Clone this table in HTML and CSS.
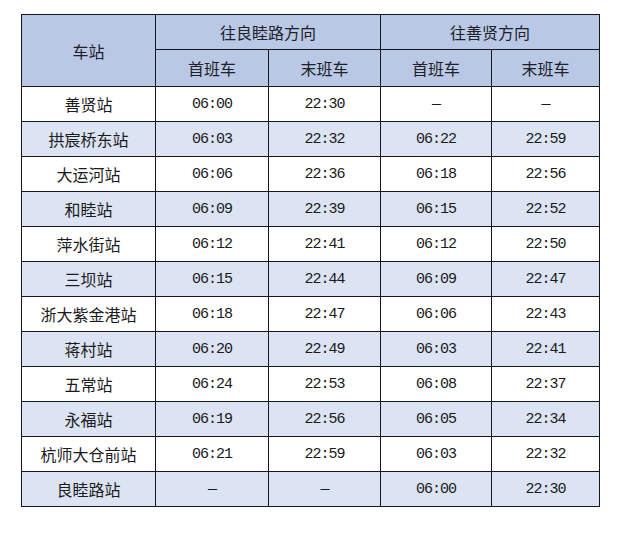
FILE: index.html
```html
<!DOCTYPE html>
<html lang="zh-CN">
<head>
<meta charset="utf-8">
<link rel="stylesheet" href="styles.css">
</head>
<body>
<table class="timetable">
  <colgroup>
    <col class="c-station">
    <col class="c1">
    <col class="c2">
    <col class="c3">
    <col class="c4">
  </colgroup>
  <thead>
    <tr class="h1">
      <th rowspan="2" class="station-h">车站</th>
      <th colspan="2">往良睦路方向</th>
      <th colspan="2">往善贤方向</th>
    </tr>
    <tr class="h2">
      <th>首班车</th><th>末班车</th><th>首班车</th><th>末班车</th>
    </tr>
  </thead>
  <tbody>
    <tr><td class="st">善贤站</td><td class="t">06:00</td><td class="t">22:30</td><td class="t">—</td><td class="t">—</td></tr>
    <tr><td class="st">拱宸桥东站</td><td class="t">06:03</td><td class="t">22:32</td><td class="t">06:22</td><td class="t">22:59</td></tr>
    <tr><td class="st">大运河站</td><td class="t">06:06</td><td class="t">22:36</td><td class="t">06:18</td><td class="t">22:56</td></tr>
    <tr><td class="st">和睦站</td><td class="t">06:09</td><td class="t">22:39</td><td class="t">06:15</td><td class="t">22:52</td></tr>
    <tr><td class="st">萍水街站</td><td class="t">06:12</td><td class="t">22:41</td><td class="t">06:12</td><td class="t">22:50</td></tr>
    <tr><td class="st">三坝站</td><td class="t">06:15</td><td class="t">22:44</td><td class="t">06:09</td><td class="t">22:47</td></tr>
    <tr><td class="st">浙大紫金港站</td><td class="t">06:18</td><td class="t">22:47</td><td class="t">06:06</td><td class="t">22:43</td></tr>
    <tr><td class="st">蒋村站</td><td class="t">06:20</td><td class="t">22:49</td><td class="t">06:03</td><td class="t">22:41</td></tr>
    <tr><td class="st">五常站</td><td class="t">06:24</td><td class="t">22:53</td><td class="t">06:08</td><td class="t">22:37</td></tr>
    <tr><td class="st">永福站</td><td class="t">06:19</td><td class="t">22:56</td><td class="t">06:05</td><td class="t">22:34</td></tr>
    <tr><td class="st">杭师大仓前站</td><td class="t">06:21</td><td class="t">22:59</td><td class="t">06:03</td><td class="t">22:32</td></tr>
    <tr><td class="st">良睦路站</td><td class="t">—</td><td class="t">—</td><td class="t">06:00</td><td class="t">22:30</td></tr>
  </tbody>
</table>
</body>
</html>
```

FILE: styles.css
```css
html, body {
  margin: 0;
  padding: 0;
  background: #ffffff;
}

body {
  padding: 14px 0 0 21px;
  font-family: "Noto Sans CJK SC", "Noto Sans", sans-serif;
  color: #1c1c1c;
}

.timetable {
  border-collapse: collapse;
  table-layout: fixed;
  width: 579px;
  border: 1px solid #1a1a24;
  border-top-color: #6d7a96;
}

.c-station { width: 134px; }
.c1 { width: 113px; }
.c2 { width: 112px; }
.c3 { width: 111px; }
.c4 { width: 108px; }

.timetable th,
.timetable td {
  border: 1px solid #16161e;
  padding: 0;
  text-align: center;
  vertical-align: middle;
  font-weight: normal;
}

.timetable th {
  background: #b9c8e5;
  font-size: 16px;
  color: #202028;
}

.h1 { height: 35px; }
.h2 { height: 37px; }

.timetable tbody tr { height: 35px; }

.timetable tbody tr:nth-child(even) td {
  background: #dce3f3;
}

.st {
  font-size: 16px;
}

.t {
  font-family: "Liberation Mono", "DejaVu Sans Mono", monospace;
  font-size: 15px;
  letter-spacing: -1px;
  color: #1a1a1a;
}
```
